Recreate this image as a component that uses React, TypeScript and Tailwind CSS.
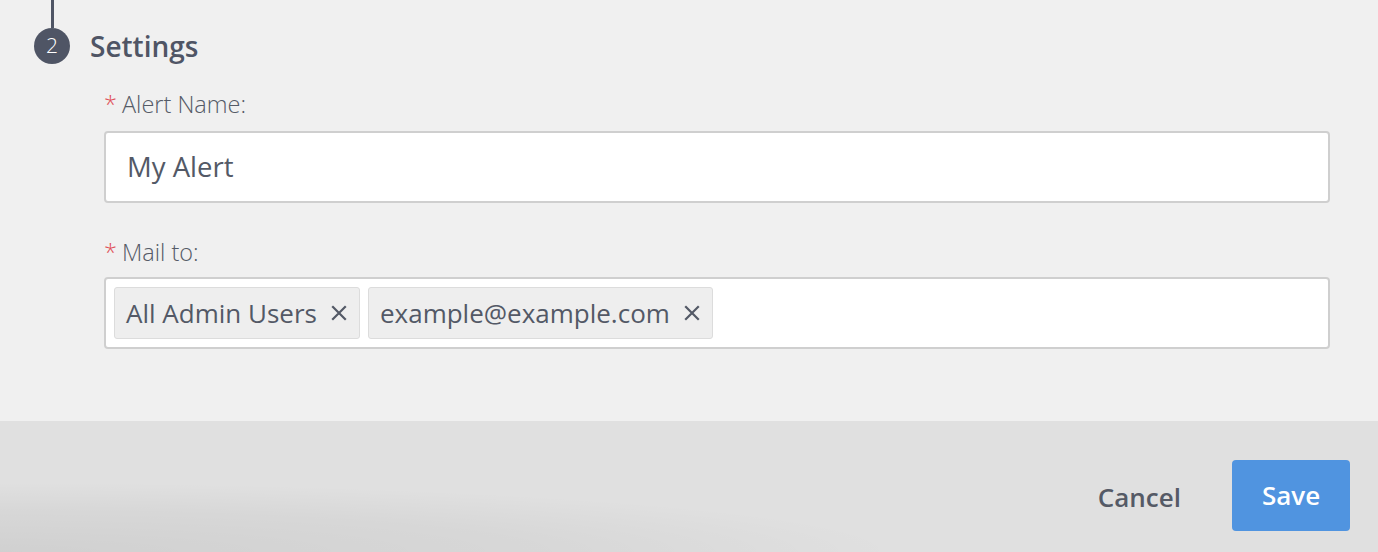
import React from "react";

const font = { fontFamily: '"Open Sans", "Noto Sans", sans-serif' };

function Tag({ label }: { label: string }) {
  return (
    <div className="flex h-[52px] items-center rounded-[3px] border border-[#dcdcdc] bg-[#eeeeee] pl-[11px] pr-[12px] text-[26px] text-[#535966]">
      <span>{label}</span>
      <svg className="ml-[14px]" width="16" height="16" viewBox="0 0 16 16" fill="none">
        <path d="M2 2L14 14M14 2L2 14" stroke="#535966" strokeWidth="2.2" strokeLinecap="square" />
      </svg>
    </div>
  );
}

export default function App() {
  return (
    <div className="flex h-[552px] w-full flex-col overflow-hidden" style={font}>
      <div className="h-[421px] bg-[#f0f0f0] pl-[34px] pr-[48px]">
        <div className="flex items-end">
          <div className="flex w-[36px] flex-col items-center">
            <div className="h-[28px] w-[3px] bg-[#4f5565]" />
            <div className="flex h-[36px] w-[36px] items-center justify-center rounded-full bg-[#4f5565] text-[21px] font-light text-white">
              2
            </div>
          </div>
          <div className="ml-[20px] flex h-[36px] items-center text-[28px] font-semibold text-[#4f5565]">
            Settings
          </div>
        </div>
        <div className="ml-[70px] mt-[27px]">
          <div className="flex h-[28px] items-center text-[23.5px] font-light text-[#555b67]">
            <span className="mr-[5px] text-[#e0505a]">*</span>
            <span>Alert Name:</span>
          </div>
          <div className="mt-[12px] flex h-[72px] items-center rounded-[4px] border-2 border-[#cfcfcf] bg-white px-[21px] text-[27.5px] text-[#535966]">
            My Alert
          </div>
          <div className="mt-[36px] flex h-[28px] items-center text-[23.5px] font-light text-[#555b67]">
            <span className="mr-[5px] text-[#e0505a]">*</span>
            <span>Mail to:</span>
          </div>
          <div className="mt-[10px] flex h-[72px] items-center gap-[8px] rounded-[4px] border-2 border-[#cfcfcf] bg-white px-[8px]">
            <Tag label="All Admin Users" />
            <Tag label="example@example.com" />
          </div>
        </div>
      </div>
      <div className="relative flex flex-1 items-start justify-end bg-[#e0e0e0] pr-[28px] pt-[39px]">
        <div className="pointer-events-none absolute bottom-0 left-0 h-[80px] w-[1000px] bg-[radial-gradient(ellipse_900px_70px_at_0%_100%,rgba(0,0,0,0.07),rgba(0,0,0,0.04)_60%,rgba(0,0,0,0)_100%)]" />
        <button className="relative mr-[51px] mt-[2px] flex h-[71px] items-center text-[26px] font-semibold text-[#555a66]">
          Cancel
        </button>
        <button className="relative flex h-[71px] w-[118px] items-center justify-center rounded-[4px] bg-[#5094e0] text-[26px] font-semibold text-white">
          Save
        </button>
      </div>
    </div>
  );
}
